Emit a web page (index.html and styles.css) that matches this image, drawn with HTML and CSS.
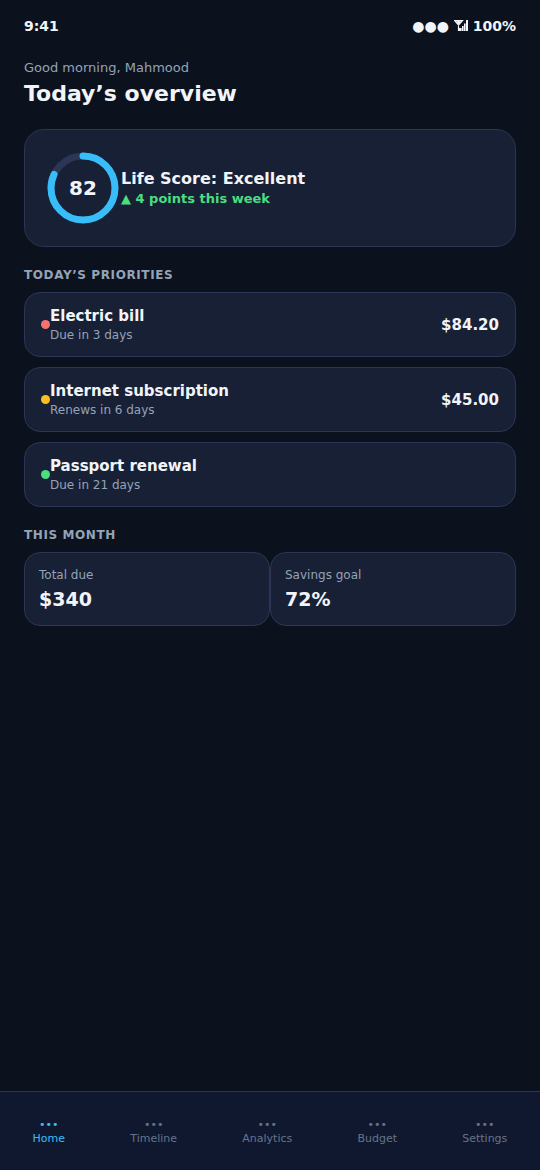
FILE: index.html
```html
<!DOCTYPE html>
<html lang="en">
<head>
<meta charset="utf-8">
<meta name="viewport" content="width=device-width, initial-scale=1">
<title>Today’s overview</title>
<link rel="stylesheet" href="styles.css">
</head>
<body>
<div class="app">
  <div class="status">
    <span>9:41</span>
    <span>●●● <svg class="signal" viewBox="0 0 14 12" role="img" aria-label="Signal"><path class="antenna" d="M.5 1.5H8.5L4.5 6ZM4.5 1.5V12M2.5 1.5L4.5 4.5L6.5 1.5"/><path class="bars" d="M5 9H7.6V12H5ZM8 7H9.6V12H8ZM10 4.5H11.6V12H10ZM12 1H14V12H12Z"/></svg> 100%</span>
  </div>
  <main class="content">
    <header class="intro">
      <p class="greeting">Good morning, Mahmood</p>
      <h1 class="title">Today’s overview</h1>
    </header>

    <section class="score">
      <div class="ring">
        <svg class="ring-art" viewBox="0 0 74 74" aria-hidden="true">
          <circle class="ring-track" cx="37" cy="37" r="32"/>
          <circle class="ring-value" cx="37" cy="37" r="32" pathLength="100" transform="rotate(-90 37 37)"/>
        </svg>
        <span class="ring-number">82</span>
      </div>
      <div class="score-text">
        <p class="score-title">Life Score: Excellent</p>
        <p class="score-trend">▲ 4 points this week</p>
      </div>
    </section>

    <h2 class="section-title">TODAY’S PRIORITIES</h2>
    <ul class="priorities">
      <li class="priority">
        <span class="dot dot-red"></span>
        <div class="priority-text"><p class="name">Electric bill</p><p class="note">Due in 3 days</p></div>
        <span class="amount">$84.20</span>
      </li>
      <li class="priority">
        <span class="dot dot-amber"></span>
        <div class="priority-text"><p class="name">Internet subscription</p><p class="note">Renews in 6 days</p></div>
        <span class="amount">$45.00</span>
      </li>
      <li class="priority">
        <span class="dot dot-green"></span>
        <div class="priority-text"><p class="name">Passport renewal</p><p class="note">Due in 21 days</p></div>
      </li>
    </ul>

    <h2 class="section-title">THIS MONTH</h2>
    <div class="stats">
      <div class="stat"><p class="note">Total due</p><p class="stat-value">$340</p></div>
      <div class="stat"><p class="note">Savings goal</p><p class="stat-value">72%</p></div>
    </div>
  </main>
  <nav class="tabs">
    <a class="tab tab-active" href="#home" aria-current="page"><span>•••</span><span>Home</span></a>
    <a class="tab" href="#timeline"><span>•••</span><span>Timeline</span></a>
    <a class="tab" href="#analytics"><span>•••</span><span>Analytics</span></a>
    <a class="tab" href="#budget"><span>•••</span><span>Budget</span></a>
    <a class="tab" href="#settings"><span>•••</span><span>Settings</span></a>
  </nav>
</div>
</body>
</html>
```
FILE: styles.css
```css
* {
  box-sizing: border-box;
}

body,
h1,
h2,
p,
ul {
  margin: 0;
  padding: 0;
}

body {
  background: #0b121e;
  color: #f1f5f9;
  font-family: "DejaVu Sans", sans-serif;
}

.app {
  display: flex;
  flex-direction: column;
  min-height: 100vh;
}

.status {
  display: flex;
  justify-content: space-between;
  padding: 18px 24px 0;
  font-size: 14px;
  line-height: 16px;
  font-weight: 700;
}

.signal {
  width: 14px;
  height: 12px;
  vertical-align: baseline;
}

.antenna {
  fill: none;
  stroke: #f1f5f9;
  stroke-width: 1.2;
}

.bars {
  fill: #f1f5f9;
}

.content {
  flex: 1;
  padding: 26px 24px;
}

.intro {
  margin-bottom: 22px;
}

.greeting {
  color: #94a3b8;
  font-size: 13px;
  line-height: 16px;
}

.title {
  margin-top: 5px;
  font-size: 22px;
  line-height: 26px;
}

.score,
.priority,
.stat {
  background: #182035;
  border: 1px solid #2a3653;
  border-radius: 16px;
}

.score {
  display: flex;
  align-items: center;
  gap: 1px;
  padding: 21px;
  border-radius: 20px;
}

.ring {
  display: grid;
  place-items: center;
  width: 74px;
  height: 74px;
}

.ring-art,
.ring-number {
  grid-area: 1 / 1;
}

.ring-art circle {
  fill: none;
  stroke-width: 7;
}

.ring-art .ring-track {
  stroke: #2a3653;
}

.ring-art .ring-value {
  stroke: #38bdf8;
  stroke-linecap: round;
  stroke-dasharray: 82 100;
}

.ring-number {
  font-size: 20px;
  line-height: 24px;
  font-weight: 700;
}

.score-text {
  padding-top: 2px;
}

.score-title {
  font-size: 16px;
  line-height: 20px;
  font-weight: 700;
}

.score-trend {
  color: #4ade80;
  font-size: 13px;
  line-height: 20px;
  font-weight: 700;
}

.section-title {
  margin: 21px 0 9px;
  color: #94a3b8;
  font-size: 12px;
  line-height: 15px;
  letter-spacing: 0.05em;
}

.priorities {
  display: grid;
  gap: 10px;
  list-style: none;
}

.priority {
  display: flex;
  align-items: center;
  padding: 12px 16px;
}

.priority-text {
  display: grid;
  flex: 1;
  gap: 1px;
  padding-top: 1px;
}

.dot {
  width: 9px;
  height: 9px;
  border-radius: 50%;
}

.dot-red {
  background: #f87171;
}

.dot-amber {
  background: #fbbf24;
}

.dot-green {
  background: #4ade80;
}

.name,
.amount {
  font-size: 15px;
  line-height: 20px;
  font-weight: 700;
}

.note {
  color: #94a3b8;
  font-size: 12px;
  line-height: 17px;
}

.stats {
  display: grid;
  grid-template-columns: 1fr 1fr;
}

.stat {
  padding: 14px;
}

.stat-value {
  margin-top: 4px;
  font-size: 19px;
  line-height: 23px;
  font-weight: 700;
}

.tabs {
  display: flex;
  justify-content: space-around;
  padding: 26px 0 24px;
  background: #101830;
  border-top: 1px solid #2b364a;
}

.tab {
  display: grid;
  justify-items: center;
  color: #64748b;
  font-size: 11px;
  line-height: 14px;
  text-decoration: none;
}

.tab-active {
  color: #38bdf8;
}
```
